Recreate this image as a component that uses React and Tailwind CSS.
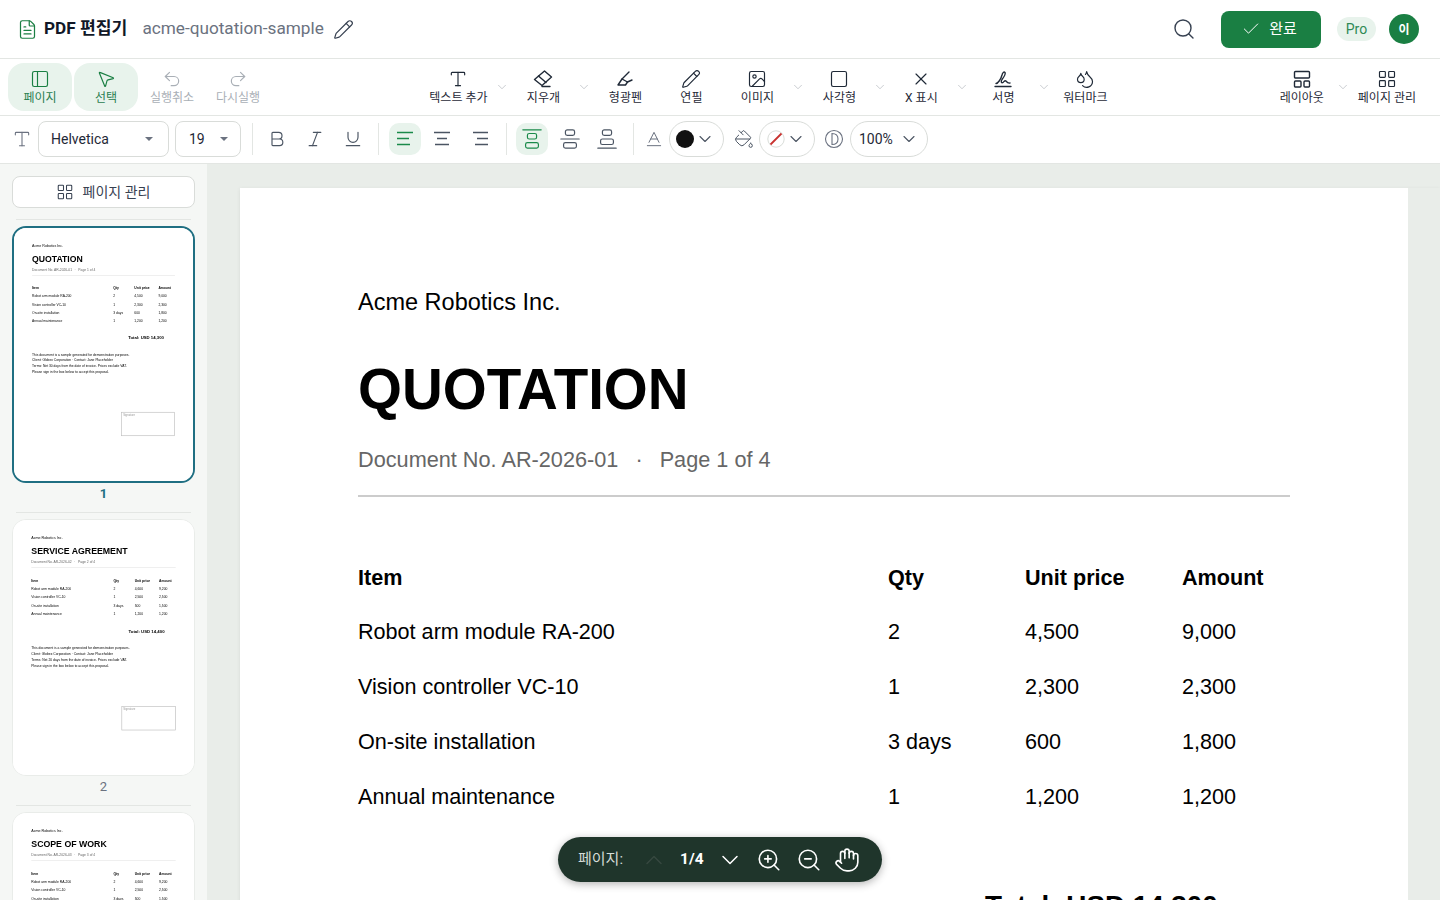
import React from "react";
import {
  FileText, Pencil, PanelLeft, MousePointer2, Undo2, Redo2, Type, Image as ImageIcon, Square, X,
  Droplets, LayoutGrid, Search, Check, ChevronDown, ChevronUp, Bold, Italic, Underline,
  AlignVerticalJustifyStart, AlignVerticalJustifyCenter, AlignVerticalJustifyEnd, PaintBucket, ZoomIn, ZoomOut, Hand, Baseline,
} from "lucide-react";

const UI = "font-['Roboto','Noto_Sans_CJK_KR',sans-serif]";

function Highlighter() {
  return (
    <svg width="20" height="20" viewBox="0 0 20 20" fill="none" stroke="currentColor" strokeWidth="1.4" strokeLinecap="round" strokeLinejoin="round">
      <path d="M14 3 7 10l-4 6h7.5l2-3 4.5-2" />
      <path d="M7 10l5.5 3" />
    </svg>
  );
}
function EraserIcon() {
  return (
    <svg width="20" height="20" viewBox="0 0 20 20" fill="none" stroke="currentColor" strokeWidth="1.4" strokeLinejoin="round" strokeLinecap="round">
      <path d="M1.5 10.5 11.5 2l7 6L9 16.5z" />
      <path d="M5.5 7l7.500 6.500" />
      <path d="M9 17.500h8" />
    </svg>
  );
}
function SignatureIcon() {
  return (
    <svg width="20" height="20" viewBox="0 0 20 20" fill="none" stroke="currentColor" strokeWidth="1.4" strokeLinecap="round" strokeLinejoin="round">
      <path d="M3 14.500C5 14.500 8 10 9 6c.5-2.500 2-3.500 3-2.500 1 1.500-1.500 5-3 7-1.500 2.500-.5 4 1 3 1.200-1 1.800-2.500 3-1.500.8 1 1.800 2.500 4 2" />
      <path d="M2 17.500h16" />
    </svg>
  );
}
function LayoutIcon() {
  return (
    <svg width="20" height="20" viewBox="0 0 20 20" fill="none" stroke="currentColor" strokeWidth="1.4" strokeLinejoin="round">
      <rect x="2.500" y="2.500" width="15" height="6.500" rx="1" />
      <rect x="2.500" y="12" width="6.500" height="6" rx="1" />
      <rect x="12" y="12" width="5.500" height="6" rx="1" />
    </svg>
  );
}
function Lines({ kind }) {
  const d = {
    left: "M2 3.500h16M2 9.500h12M2 15.500h13",
    center: "M2 3.500h16M5 9.500h10M3 15.500h14",
    right: "M2 3.500h15M6 9.500h11M4 15.500h13",
  }[kind];
  return (
    <svg width="20" height="19" viewBox="0 0 20 19" fill="none" stroke="currentColor" strokeWidth="1.5">
      <path d={d} />
    </svg>
  );
}
function Contrast() {
  return (
    <svg width="20" height="20" viewBox="0 0 20 20" fill="none" stroke="currentColor" strokeWidth="1.1">
      <circle cx="10" cy="10" r="8.500" />
      <path d="M8 4.500c4 0 6 2.200 6 5.500s-2 5.500-6 5.500z" />
    </svg>
  );
}
function NoFill() {
  return (
    <svg width="18" height="18" viewBox="0 0 18 18" fill="none">
      <circle cx="9" cy="9" r="8.200" fill="#fff" stroke="#d8dcd8" />
      <path d="M3.500 14.500l11-11" stroke="#c8322f" strokeWidth="1.800" />
    </svg>
  );
}

function TopTool({ icon, label, active, disabled }) {
  const color = active ? "bg-[#e8f3ec] text-[#2a8050]" : disabled ? "text-[#a9afb6]" : "text-[#374151]";
  const iconColor = active ? "text-[#1a7f43]" : disabled ? "text-[#a9afb6]" : "text-[#1f2937]";
  return (
    <button className={`flex h-12 min-w-16 flex-col items-center rounded-2xl pt-1.5 ${color}`}>
      <span className={iconColor}>{icon}</span>
      <span className="mt-px text-xs leading-4">{label}</span>
    </button>
  );
}
function Tool({ icon, label, wide }) {
  return (
    <button className={`flex h-12 flex-col items-center px-1.5 pt-1.5 text-[#1f2937] ${wide ? "min-w-[72px]" : "min-w-[66px]"}`}>
      {icon}
      <span className="mt-px whitespace-nowrap text-xs leading-4">{label}</span>
    </button>
  );
}
function Caret({ wide }) {
  return (
    <span className={`flex justify-center text-[#a3a9b0] ${wide ? "w-[17px]" : "w-4"}`}>
      <ChevronDown size={14} strokeWidth={1} />
    </span>
  );
}
const ic = { size: 20, strokeWidth: 1.4 };

function FormatBtn({ children, active, className = "" }) {
  return (
    <button className={`flex h-8 w-8 items-center justify-center rounded-[10px] ${active ? "bg-[#e8f3ec] text-[#1a8a4a]" : "text-[#4b5563]"} ${className}`}>
      {children}
    </button>
  );
}
function Sep({ className }) {
  return <span className={`block h-8 w-px bg-[#e3e6e3] ${className}`} />;
}
function Tri() {
  return <span className="h-0 w-0 border-x-4 border-t-4 border-x-transparent border-t-[#6b7280]" />;
}
function Pill({ children, w }) {
  return (
    <div className={`flex h-9 items-center justify-between rounded-full border border-[#d9dcd9] bg-white ${w}`}>
      {children}
    </div>
  );
}

const page1 = {
  title: "QUOTATION", no: "AR-2026-01", page: "Page 1 of 4", total: "Total: USD 14,300", net: "30",
  rows: [
    ["Robot arm module RA-200", "2", "4,500", "9,000"],
    ["Vision controller VC-10", "1", "2,300", "2,300"],
    ["On-site installation", "3 days", "600", "1,800"],
    ["Annual maintenance", "1", "1,200", "1,200"],
  ],
};
const page2 = {
  title: "SERVICE AGREEMENT", no: "AR-2026-02", page: "Page 2 of 4", total: "Total: USD 14,400", net: "20",
  rows: [
    ["Robot arm module RA-200", "2", "4,600", "9,200"],
    ["Vision controller VC-10", "1", "2,500", "2,500"],
    ["On-site installation", "3 days", "500", "1,500"],
    ["Annual maintenance", "1", "1,200", "1,200"],
  ],
};
const page3 = { ...page2, title: "SCOPE OF WORK", no: "AR-2026-03", page: "Page 3 of 4", rows: page2.rows };

function Row({ cells, bold }) {
  return (
    <div className={`grid h-[55px] grid-cols-[530px_137px_157px_1fr] items-center text-[21.6px] text-black ${bold ? "font-bold" : ""}`}>
      {cells.map((c, i) => (
        <span key={i}>{c}</span>
      ))}
    </div>
  );
}
function Doc({ d }) {
  return (
    <div className="h-[1652px] w-[1168px] bg-white px-[118px] pt-[98px] font-['Liberation_Sans',Arial,sans-serif] text-black">
      <div className="text-[23.5px] leading-[32px]">Acme Robotics Inc.</div>
      <div className="mt-[41px] whitespace-nowrap text-[56.5px] font-bold leading-[62px]">{d.title}</div>
      <div className="mt-[24px] flex h-[30px] items-center text-[21.7px] text-[#666666]">
        <span>Document No. {d.no}</span>
        <span className="mx-[17px]">·</span>
        <span>{d.page}</span>
      </div>
      <div className="mt-[20px] h-0.5 w-[932px] bg-[#cccccc]" />
      <div className="mt-[54px]">
        <Row bold cells={["Item", "Qty", "Unit price", "Amount"]} />
        <div className="-mt-px">
          {d.rows.map((r) => (
            <Row key={r[0]} cells={r} />
          ))}
        </div>
      </div>
      <div className="ml-[627px] mt-[65px] whitespace-nowrap text-[27.8px] font-bold leading-8">{d.total}</div>
      <div className="mt-[72px] text-[21.6px] leading-[38px]">
        <div>This document is a sample generated for demonstration purposes.</div>
        <div>Client: Globex Corporation · Contact: Jane Placeholder</div>
        <div>Terms: Net {d.net} days from the date of invoice. Prices exclude VAT.</div>
        <div>Please sign in the box below to accept this proposal.</div>
      </div>
      <div className="ml-[582px] mt-[242px] h-[157px] w-[350px] border-4 border-[#bbbbbb] px-2 py-1 text-[18px] text-[#999999]">Signature</div>
    </div>
  );
}
function Thumb({ d, n, active }) {
  return (
    <div>
      <div className="mx-4 h-px bg-[#e3e6e3]" />
      <div className={`relative mx-3 mt-1.5 h-[257px] overflow-hidden rounded-[14px] bg-white ${active ? "border-2 border-[#1f6f82]" : "border border-[#e9ece9]"}`}>
        <div className={`absolute left-0 top-0 origin-top-left antialiased will-change-transform ${active ? "scale-[0.1533]" : "scale-[0.155]"}`}>
          <Doc d={d} />
        </div>
      </div>
      <div className={`flex h-[29px] items-center justify-center pb-[7px] text-[13px] ${active ? "font-bold text-[#1f6f82]" : "text-[#6b7280]"}`}>{n}</div>
    </div>
  );
}

export default function App() {
  return (
    <div className={`relative flex h-[900px] flex-col overflow-hidden bg-white ${UI}`}>
      {/* Header */}
      <header className="flex h-[59px] shrink-0 items-center border-b border-[#e3e6e3] pl-[17px] pr-[21px]">
        <FileText size={21} strokeWidth={1.4} className="text-[#1a7f43]" />
        <span className="ml-[6px] text-[17.2px] font-bold text-[#111827]">PDF 편집기</span>
        <span className="ml-[15px] text-[17.2px] text-[#6b7280]">acme-quotation-sample</span>
        <Pencil size={21} strokeWidth={1.4} className="ml-[9px] text-[#374151]" />
        <div className="flex-1" />
        <Search size={24} strokeWidth={1.4} className="text-[#374151]" />
        <button className="ml-[25px] flex h-[37px] w-[100px] items-center justify-center gap-2 rounded-lg bg-[#1a7f43] pr-1 text-[15px] text-white">
          <Check size={20} strokeWidth={1.2} />
          완료
        </button>
        <span className="ml-4 flex h-6 w-[39px] items-center justify-center rounded-full bg-[#e8f3ec] text-sm text-[#2f8a56]">Pro</span>
        <span className="ml-[13px] flex h-[30px] w-[30px] items-center justify-center rounded-full bg-[#1a7f43] pt-px text-xs font-bold text-white">이</span>
      </header>

      {/* Tools */}
      <div className="flex h-[57px] shrink-0 items-center border-b border-[#e3e6e3] pl-2 pr-[18px]">
        <div className="flex gap-0.5">
          <TopTool active icon={<PanelLeft {...ic} />} label="페이지" />
          <TopTool active icon={<MousePointer2 {...ic} />} label="선택" />
          <TopTool disabled icon={<Undo2 {...ic} />} label="실행취소" />
          <TopTool disabled icon={<Redo2 {...ic} />} label="다시실행" />
        </div>
        <div className="ml-0.5 flex flex-1 items-center justify-center">
          <Tool wide icon={<Type {...ic} />} label="텍스트 추가" />
          <Caret />
          <Tool icon={<EraserIcon />} label="지우개" />
          <Caret />
          <Tool icon={<Highlighter />} label="형광펜" />
          <Tool icon={<Pencil {...ic} />} label="연필" />
          <Tool icon={<ImageIcon {...ic} />} label="이미지" />
          <Caret />
          <Tool icon={<Square {...ic} />} label="사각형" />
          <Caret />
          <Tool icon={<X {...ic} />} label="X 표시" />
          <Caret />
          <Tool icon={<SignatureIcon />} label="서명" />
          <Caret />
          <Tool icon={<Droplets {...ic} />} label="워터마크" />
        </div>
        <div className="flex items-center">
          <Tool icon={<LayoutIcon />} label="레이아웃" />
          <Caret wide />
          <Tool icon={<LayoutGrid {...ic} />} label="페이지 관리" />
        </div>
      </div>

      {/* Format bar */}
      <div className="flex h-12 shrink-0 items-center border-b border-[#e3e6e3] pb-0.5 pl-3">
        <Type size={20} strokeWidth={1.3} className="text-[#6b7280]" />
        <div className="ml-1.5 flex h-9 w-[131px] items-center justify-between rounded-lg border border-[#d9dcd9] pl-3 pr-[15px] text-sm text-[#1f2937]">
          Helvetica <Tri />
        </div>
        <div className="ml-1.5 flex h-9 w-[66px] items-center justify-between rounded-lg border border-[#d9dcd9] pl-[13px] pr-[12px] text-sm text-[#1f2937]">
          19 <Tri />
        </div>
        <Sep className="ml-[11px]" />
        <div className="ml-2 flex gap-1.5">
          <FormatBtn><Bold size={20} strokeWidth={1.4} /></FormatBtn>
          <FormatBtn><Italic size={20} strokeWidth={1.4} /></FormatBtn>
          <FormatBtn><Underline size={20} strokeWidth={1.4} /></FormatBtn>
        </div>
        <Sep className="ml-[9px]" />
        <div className="ml-2.5 flex">
          <FormatBtn active><Lines kind="left" /></FormatBtn>
          <FormatBtn className="ml-[5px]"><Lines kind="center" /></FormatBtn>
          <FormatBtn className="ml-[7px]"><Lines kind="right" /></FormatBtn>
        </div>
        <Sep className="ml-[9px]" />
        <div className="ml-[9px] flex">
          <FormatBtn active><AlignVerticalJustifyStart size={22} strokeWidth={1.3} /></FormatBtn>
          <FormatBtn className="ml-1.5"><AlignVerticalJustifyCenter size={22} strokeWidth={1.3} /></FormatBtn>
          <FormatBtn className="ml-[5px]"><AlignVerticalJustifyEnd size={22} strokeWidth={1.3} /></FormatBtn>
        </div>
        <Sep className="ml-[10px]" />
        <Baseline size={20} strokeWidth={1.2} className="ml-[10px] text-[#6b7280]" />
        <div className="ml-[5px]">
          <Pill w="w-[55px] pl-1.5 pr-2">
            <span className="h-[18px] w-[18px] rounded-full bg-[#111111]" />
            <ChevronDown size={20} strokeWidth={1.3} className="text-[#4b5563]" />
          </Pill>
        </div>
        <PaintBucket size={20} strokeWidth={1.2} className="ml-2.5 text-[#4b5563]" />
        <div className="ml-[5px]">
          <Pill w="w-14 pl-[7px] pr-2">
            <NoFill />
            <ChevronDown size={20} strokeWidth={1.3} className="text-[#4b5563]" />
          </Pill>
        </div>
        <span className="ml-[9px] text-[#6b7280]"><Contrast /></span>
        <div className="ml-1.5">
          <Pill w="w-[78px] pl-2 pr-2">
            <span className="text-sm text-[#1f2937]">100%</span>
            <ChevronDown size={20} strokeWidth={1.3} className="text-[#4b5563]" />
          </Pill>
        </div>
      </div>

      {/* Body */}
      <div className="flex min-h-0 flex-1">
        <aside className="w-[207px] shrink-0 overflow-hidden bg-[#f5f7f5]">
          <div className="px-3 pb-[11px] pt-3">
            <button className="flex h-8 w-full items-center justify-center gap-[9px] rounded-lg border border-[#d9dcd9] bg-white pr-px text-sm text-[#374151]">
              <LayoutGrid size={18} strokeWidth={1.4} />
              페이지 관리
            </button>
          </div>
          <Thumb d={page1} n="1" active />
          <Thumb d={page2} n="2" />
          <Thumb d={page3} n="3" />
        </aside>
        <main className="min-w-0 flex-1 overflow-hidden bg-[#e9ede9] pl-[33px] pt-6">
          <div className="shadow-[0_1px_4px_rgba(0,0,0,0.08)]">
            <Doc d={page1} />
          </div>
        </main>
      </div>

      {/* Floating page bar */}
      <div className="absolute bottom-[18px] left-[558px] flex h-[45px] w-[324px] items-center rounded-full bg-[#1f352b] pl-5 text-white shadow-[0_2px_8px_rgba(0,0,0,0.3)]">
        <span className="text-[15px] text-[#d5ddd8]">페이지:</span>
        <ChevronUp size={28} strokeWidth={1.3} className="ml-[17px] text-[#36483f]" />
        <span className="ml-3 text-[15.5px] font-bold">1/4</span>
        <ChevronDown size={28} strokeWidth={1.3} className="ml-3" />
        <ZoomIn size={26} strokeWidth={1.5} className="ml-3" />
        <ZoomOut size={26} strokeWidth={1.5} className="ml-[14px]" />
        <Hand size={26} strokeWidth={1.5} className="ml-3" />
      </div>
    </div>
  );
}
